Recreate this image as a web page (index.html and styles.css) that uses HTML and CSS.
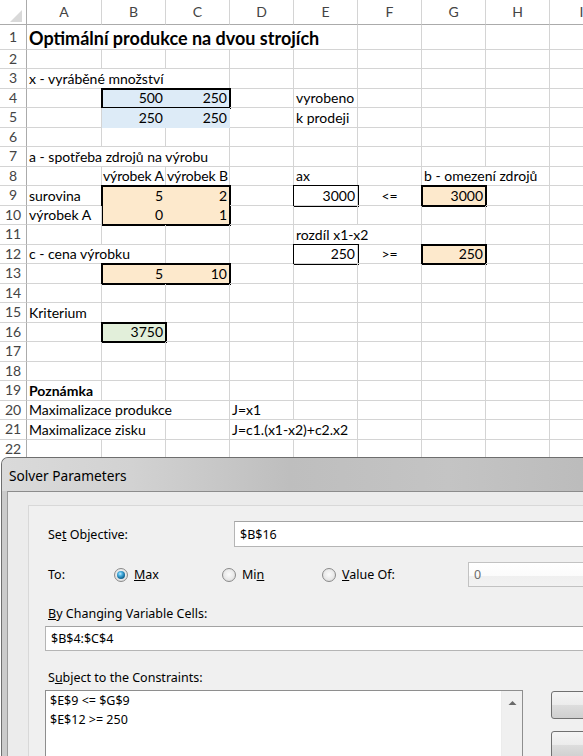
FILE: index.html
```html
<!DOCTYPE html>
<html lang="cs">
<head>
<meta charset="utf-8">
<title>Solver</title>
<link rel="stylesheet" href="styles.css">
</head>
<body>
<div class="page">
  <div class="sheet">
    <div class="grid">
      <!-- header -->
      <div class="c h corner"><svg width="26" height="24" viewBox="0 0 26 24"><polygon points="22,10 22,22 10,22" fill="#d9d9d9"/></svg></div>
      <div class="c h">A</div><div class="c h">B</div><div class="c h">C</div><div class="c h">D</div><div class="c h">E</div><div class="c h">F</div><div class="c h">G</div><div class="c h">H</div><div class="c h">I</div>
      <!-- 1 -->
      <div class="c rh">1</div><div class="c s5 title">Optimální produkce na dvou strojích</div><div class="c"></div><div class="c"></div><div class="c"></div><div class="c"></div>
      <!-- 2 -->
      <div class="c rh">2</div><div class="c"></div><div class="c"></div><div class="c"></div><div class="c"></div><div class="c"></div><div class="c"></div><div class="c"></div><div class="c"></div><div class="c"></div>
      <!-- 3 -->
      <div class="c rh">3</div><div class="c s3">x - vyráběné množství</div><div class="c"></div><div class="c"></div><div class="c"></div><div class="c"></div><div class="c"></div><div class="c"></div>
      <!-- 4 -->
      <div class="c rh">4</div><div class="c"></div>
      <div class="box2"><div class="c blue num">500</div><div class="c blue num">250</div></div>
      <div class="c"></div><div class="c">vyrobeno</div><div class="c"></div><div class="c"></div><div class="c"></div><div class="c"></div>
      <!-- 5 -->
      <div class="c rh">5</div><div class="c"></div><div class="c blue num">250</div><div class="c blue num">250</div><div class="c"></div><div class="c">k prodeji</div><div class="c"></div><div class="c"></div><div class="c"></div><div class="c"></div>
      <!-- 6 -->
      <div class="c rh">6</div><div class="c"></div><div class="c"></div><div class="c"></div><div class="c"></div><div class="c"></div><div class="c"></div><div class="c"></div><div class="c"></div><div class="c"></div>
      <!-- 7 -->
      <div class="c rh">7</div><div class="c s3">a - spotřeba zdrojů na výrobu</div><div class="c"></div><div class="c"></div><div class="c"></div><div class="c"></div><div class="c"></div><div class="c"></div>
      <!-- 8 -->
      <div class="c rh">8</div><div class="c"></div><div class="c tight">výrobek A</div><div class="c tight">výrobek B</div><div class="c"></div><div class="c">ax</div><div class="c"></div><div class="c s2">b - omezení zdrojů</div><div class="c"></div>
      <!-- 9 -->
      <div class="c rh">9</div><div class="c">surovina</div>
      <div class="box22"><div class="c orange num">5</div><div class="c orange num">2</div><div class="c orange num">0</div><div class="c orange num">1</div></div>
      <div class="c"></div><div class="c thin num">3000</div><div class="c mid">&lt;=</div><div class="c thick orange num">3000</div><div class="c"></div><div class="c"></div>
      <!-- 10 -->
      <div class="c rh">10</div><div class="c">výrobek A</div><div class="c"></div><div class="c"></div><div class="c"></div><div class="c"></div><div class="c"></div><div class="c"></div>
      <!-- 11 -->
      <div class="c rh">11</div><div class="c"></div><div class="c"></div><div class="c"></div><div class="c"></div><div class="c s2">rozdíl x1-x2</div><div class="c"></div><div class="c"></div><div class="c"></div>
      <!-- 12 -->
      <div class="c rh">12</div><div class="c s2">c - cena výrobku</div><div class="c"></div><div class="c"></div><div class="c thin num">250</div><div class="c mid">&gt;=</div><div class="c thick orange num">250</div><div class="c"></div><div class="c"></div>
      <!-- 13 -->
      <div class="c rh">13</div><div class="c"></div>
      <div class="box2"><div class="c orange num">5</div><div class="c orange num">10</div></div>
      <div class="c"></div><div class="c"></div><div class="c"></div><div class="c"></div><div class="c"></div><div class="c"></div>
      <!-- 14 -->
      <div class="c rh">14</div><div class="c"></div><div class="c"></div><div class="c"></div><div class="c"></div><div class="c"></div><div class="c"></div><div class="c"></div><div class="c"></div><div class="c"></div>
      <!-- 15 -->
      <div class="c rh">15</div><div class="c">Kriterium</div><div class="c"></div><div class="c"></div><div class="c"></div><div class="c"></div><div class="c"></div><div class="c"></div><div class="c"></div><div class="c"></div>
      <!-- 16 -->
      <div class="c rh">16</div><div class="c"></div><div class="c thick green num">3750</div><div class="c"></div><div class="c"></div><div class="c"></div><div class="c"></div><div class="c"></div><div class="c"></div><div class="c"></div>
      <!-- 17 -->
      <div class="c rh">17</div><div class="c"></div><div class="c"></div><div class="c"></div><div class="c"></div><div class="c"></div><div class="c"></div><div class="c"></div><div class="c"></div><div class="c"></div>
      <!-- 18 -->
      <div class="c rh">18</div><div class="c"></div><div class="c"></div><div class="c"></div><div class="c"></div><div class="c"></div><div class="c"></div><div class="c"></div><div class="c"></div><div class="c"></div>
      <!-- 19 -->
      <div class="c rh">19</div><div class="c bold">Poznámka</div><div class="c"></div><div class="c"></div><div class="c"></div><div class="c"></div><div class="c"></div><div class="c"></div><div class="c"></div><div class="c"></div>
      <!-- 20 -->
      <div class="c rh">20</div><div class="c s3">Maximalizace produkce</div><div class="c">J=x1</div><div class="c"></div><div class="c"></div><div class="c"></div><div class="c"></div><div class="c"></div>
      <!-- 21 -->
      <div class="c rh">21</div><div class="c s2">Maximalizace zisku</div><div class="c"></div><div class="c s2">J=c1.(x1-x2)+c2.x2</div><div class="c"></div><div class="c"></div><div class="c"></div><div class="c"></div>
      <!-- 22 -->
      <div class="c rh">22</div><div class="c"></div><div class="c"></div><div class="c"></div><div class="c"></div><div class="c"></div><div class="c"></div><div class="c"></div><div class="c"></div><div class="c"></div>
    </div>
  </div>

  <div class="dlg">
    <div class="titlebar">Solver Parameters</div>
    <div class="frame">
      <div class="client">
        <div class="panel">
          <div class="row obj">
            <div class="lbl w-obj">Se<u>t</u> Objective:</div>
            <div class="input wide">$B$16</div>
          </div>
          <div class="row to">
            <div class="lbl w-to">To:</div>
            <div class="opt w-max"><span class="radio on"></span><span><u>M</u>ax</span></div>
            <div class="opt w-min"><span class="radio"></span><span>Mi<u>n</u></span></div>
            <div class="opt w-val"><span class="radio"></span><span><u>V</u>alue Of:</span></div>
            <div class="input disabled">0</div>
          </div>
          <div class="lbl caption"><u>B</u>y Changing Variable Cells:</div>
          <div class="input full">$B$4:$C$4</div>
          <div class="lbl caption">S<u>u</u>bject to the Constraints:</div>
          <div class="constraints">
            <div class="listbox">
              <div class="items">
                <div class="item">$E$9 &lt;= $G$9</div>
                <div class="item">$E$12 &gt;= 250</div>
              </div>
              <div class="vscroll"><svg width="21" height="18" viewBox="0 0 21 18"><polygon points="6.5,12 10.5,8 14.5,12" fill="#6a6a6a"/></svg></div>
            </div>
            <div class="buttons">
              <div class="btn"></div>
              <div class="btn"></div>
            </div>
          </div>
        </div>
      </div>
    </div>
  </div>
</div>
</body>
</html>
```

FILE: styles.css
```css
* { box-sizing: border-box; }
html, body { margin: 0; padding: 0; background: #fff; }

.page {
  width: 583px;
  height: 756px;
  overflow: hidden;
  display: flex;
  flex-direction: column;
}

/* ---------- spreadsheet ---------- */
.sheet {
  flex: none;
  height: 457px;
  overflow: hidden;
}
.grid {
  display: grid;
  width: 614px;
  grid-template-columns: 27px 75px repeat(8, 64px);
  grid-template-rows: 25px 24.5px repeat(21, 19.5px);
  font-family: Lato, "Liberation Sans", sans-serif;
  font-size: 14px;
  color: #000;
}
.c {
  display: flex;
  align-items: center;
  min-width: 0;
  padding: 1px 2px 0;
  border-right: 1px solid #d4d4d4;
  border-bottom: 1px solid #d4d4d4;
  white-space: nowrap;
  overflow: hidden;
  line-height: 1;
}
.tight { padding-left: 1px; padding-right: 0; letter-spacing: -0.15px; overflow: visible; }
.h {
  justify-content: center;
  color: #444;
  font-size: 14px;
  border-bottom-color: #ababab;
  padding: 0;
}
.corner { border-right-color: #ababab; align-items: flex-start; justify-content: flex-start; }
.corner svg { display: block; }
.rh {
  justify-content: center;
  color: #444;
  font-size: 14px;
  border-right-color: #ababab;
  padding: 0;
}
.s2 { grid-column: span 2; }
.s3 { grid-column: span 3; }
.s5 { grid-column: span 5; }
.title { font-weight: bold; font-size: 18px; padding-top: 2px; }
.bold { font-weight: bold; }
.num { justify-content: flex-end; }
.mid { justify-content: center; }

.blue { background: #ddebf7; border-color: #ddebf7; }
.orange { background: #fde9cc; border-color: #fde9cc; }
.green { background: #e2efda; border-color: #e2efda; }

.box2, .box22 {
  grid-column: span 2;
  display: grid;
  grid-template-columns: 1fr 1fr;
  outline: 2px solid #000;
  outline-offset: -1px;
}
.box22 {
  grid-row: span 2;
  grid-template-rows: 1fr 1fr;
}
.thick { outline: 2px solid #000; outline-offset: -1px; }
.thin { outline: 1px solid #000; }

/* ---------- dialog ---------- */
.dlg {
  flex: none;
  width: 720px;
  margin-left: 1px;
  border-top: 1px solid #6e6e6e;
  border-left: 1px solid #6e6e6e;
  border-radius: 7px 0 0 0;
  background: #cbcbcb;
  overflow: hidden;
  font-family: "Noto Sans", "Open Sans", sans-serif;
  color: #000;
}
.titlebar {
  height: 33px;
  padding: 2px 0 0 7px;
  display: flex;
  align-items: center;
  font-size: 13.7px;
  background: linear-gradient(to right, #dadada 0, #d2d2d2 18%, #bebebe 40%, #c4c4c4 62%, #bababa 85%, #c2c2c2 100%);
}
.frame { padding-left: 5px; }
.client {
  height: 280px;
  border-top: 1px solid #8c8c8c;
  border-left: 1px solid #9a9a9a;
  background: #ececec;
  padding: 13px 0 0 20px;
}
.panel {
  height: 300px;
  border-top: 1px solid #d8d8d8;
  border-left: 1px solid #d8d8d8;
  background: #f0f0f0;
  padding: 15px 0 0 16px;
  font-size: 12.5px;
}
.row { display: flex; align-items: center; }
.obj { height: 26px; }
.to { height: 25px; margin-top: 15px; }
.lbl { padding-left: 3px; flex: none; white-space: nowrap; }
.w-obj { width: 189px; }
.w-to { width: 69px; }
.caption { line-height: 16px; height: 16px; margin-top: 19px; }
.opt { flex: none; display: flex; align-items: center; gap: 6px; }
.w-max { width: 108px; }
.w-min { width: 100px; }
.w-val { width: 146px; }

.radio {
  flex: none;
  width: 14px;
  height: 14px;
  border-radius: 50%;
  border: 1px solid #8a8a8a;
  background: radial-gradient(circle at 50% 45%, #fbfbfb 0, #e9e9e9 55%, #cfcfcf 100%);
  display: flex;
  align-items: center;
  justify-content: center;
}
.radio.on::after {
  content: "";
  width: 8px;
  height: 8px;
  border-radius: 50%;
  background: radial-gradient(circle at 40% 35%, #c4ecff 0, #4cb2e2 28%, #17709f 62%, #0b4267 100%);
}

.input {
  flex: none;
  height: 26px;
  display: flex;
  align-items: center;
  padding-left: 5px;
  background: #fff;
  border: 1px solid #b5b5b5;
  border-top-color: #a3a3a3;
  white-space: nowrap;
}
.wide { width: 400px; }
.disabled {
  width: 200px;
  height: 25px;
  color: #6d6d6d;
  background: linear-gradient(#ffffff 0, #fbfbfb 55%, #efefef 56%, #f2f2f2 100%);
  border-color: #c2c2c2;
}
.full { width: 620px; height: 25px; margin-top: 4px; }

.constraints { display: flex; margin-top: 4px; }
.listbox {
  flex: none;
  width: 478px;
  height: 100px;
  display: flex;
  background: #fff;
  border: 1px solid #8e8e8e;
}
.items { flex: 1; padding: 1px 4px; line-height: 18.5px; }
.vscroll { flex: none; width: 21px; background: #f0f0f0; border-left: 1px solid #ececec; }
.vscroll svg { display: block; margin-top: 2px; }
.buttons {
  flex: none;
  margin: 1px 0 0 28px;
  display: flex;
  flex-direction: column;
  gap: 12px;
}
.btn {
  width: 80px;
  height: 28px;
  border: 1px solid #707070;
  border-radius: 3px;
  background: linear-gradient(#f4f4f4 0, #ececec 48%, #dddddd 50%, #cfcfcf 100%);
}
```
